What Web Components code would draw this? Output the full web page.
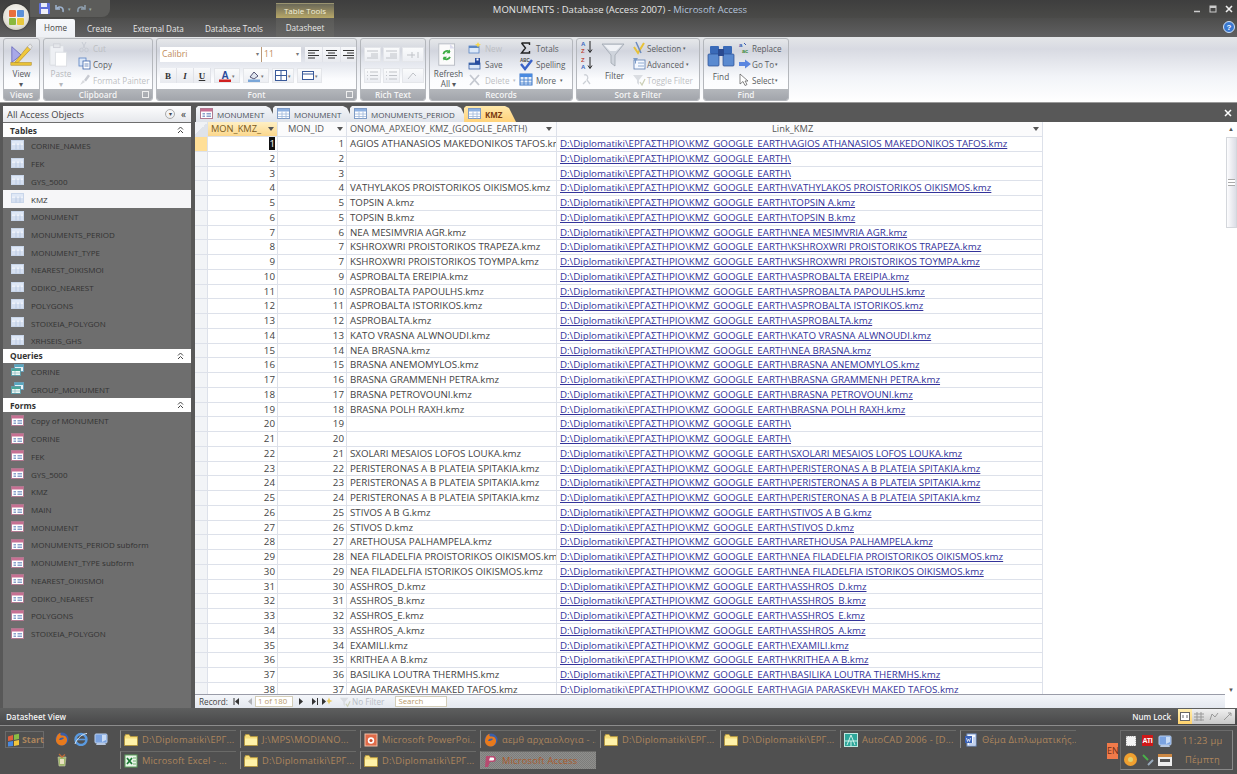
<!DOCTYPE html>
<html><head><meta charset="utf-8"><title>MONUMENTS</title>
<style>
html,body{margin:0;padding:0;width:1237px;height:774px;overflow:hidden;background:#555;font-family:"Open Sans","Noto Sans",sans-serif}
</style></head><body>
<am-app></am-app>
<script>
const ICONS={
table:'<rect x=".5" y="1.5" width="12" height="10" fill="#fff" stroke="#7f9cc6"/><rect x="1" y="2" width="11" height="2.5" fill="#8fb2e2"/><path d="M1 7h11M1 9.5h11M5 4.5v7M9 4.5v7" stroke="#9db6da" stroke-width=".8" fill="none"/>',
tablenav:'<rect x=".5" y="1.5" width="12" height="9" fill="#eef2fa" stroke="#c9d6ea"/><rect x="1" y="2" width="11" height="2.5" fill="#dfe8f6"/><path d="M1 7h11M1 9h11M5 4.5v6M9 4.5v6" stroke="#b4c6e2" stroke-width=".8" fill="none"/>',
form:'<rect x=".5" y="1.5" width="12" height="10" fill="#fff" stroke="#b07a90"/><rect x="1" y="2" width="11" height="2.5" fill="#c76f92"/><rect x="2.500" y="6" width="2.500" height="1.500" fill="#8aa2cc"/><rect x="6.500" y="6" width="4.500" height="1.500" fill="#8aa2cc"/><rect x="2.500" y="8.500" width="2.500" height="1.500" fill="#8aa2cc"/><rect x="6.500" y="8.500" width="4.500" height="1.500" fill="#8aa2cc"/>',
query:'<rect x="3.500" y=".5" width="9" height="7" fill="#e8f2f8" stroke="#6ba0b8"/><rect x="4" y="1" width="8" height="2" fill="#58a8c0"/><rect x=".5" y="4.500" width="9" height="7" fill="#eef8f4" stroke="#5f9da8"/><rect x="1" y="5" width="8" height="2" fill="#4aa89a"/><path d="M1 9h8M4 7v4" stroke="#8ab8c0" stroke-width=".7"/>',
folder:'<path d="M.5 4V12.500H13.500V3.500H6.500L5 1.500H1.500Z" fill="#f6dd7a" stroke="#b8983c" stroke-width=".8"/><path d="M1 5.500H13V12H1Z" fill="#fff2a8"/>',
firefox:'<circle cx="7" cy="7" r="6.500" fill="#3a5ea8"/><path d="M1 9C1 3.500 4 1 6 .8 5 2 5 3 6.500 3.500 9 3 11.500 4 12 7 12.500 10.500 10 13.500 7 13.500 4 13.500 1.500 11.500 1 9Z" fill="#e87a1c"/><path d="M4 8C5 5.500 7 5 9 6 8 7 7.500 7.500 6 8Z" fill="#3a5ea8"/>',
ie:'<circle cx="7" cy="7.500" r="5.500" fill="none" stroke="#5a9ae0" stroke-width="2.400"/><path d="M2 7.500H12" stroke="#5a9ae0" stroke-width="1.600"/><path d="M1 12C3 6 9 1.500 13 1.500" stroke="#d8e8f8" stroke-width="1" fill="none"/>',
desk:'<rect x="1" y="2" width="12" height="9" rx="1" fill="#7aa2e0" stroke="#b9cfee"/><path d="M3 11H11L12 13H2Z" fill="#b8c8e0"/><path d="M8 3H12V8L8 10Z" fill="#c9dcf6"/>',
trash:'<path d="M3 4H11L10 13H4Z" fill="#9fb86a" stroke="#c8c8a8" stroke-width=".6"/><path d="M4 1L7 4 10 1.500" stroke="#c06a3a" stroke-width="1.300" fill="none"/><rect x="5" y="6" width="4" height="5" fill="#e8e0c0"/>',
start:'<path d="M1 3.500 6 2V7L1 8Z" fill="#e0603c"/><path d="M7 1.800 12 .8V6L7 7Z" fill="#8abb44"/><path d="M1 9 6 8V13L1 13.500Z" fill="#4a8ae0"/><path d="M7 8 12 7V12L7 13Z" fill="#f2c63c"/>',
ppt:'<rect x="1" y="1" width="12" height="12" fill="#e06a48" stroke="#f0c0a8"/><circle cx="7" cy="7.500" r="3.200" fill="#fff"/><circle cx="7" cy="7.500" r="1.600" fill="#c84a2c"/>',
excel:'<rect x="1" y="1" width="12" height="12" fill="#e8f4e8" stroke="#5aa05a"/><path d="M3 4 8 10M8 4 3 10" stroke="#1c7a34" stroke-width="1.700"/><path d="M9 4h3M9 7h3M9 10h3" stroke="#6ab06a" stroke-width="1"/>',
acad:'<rect x=".5" y=".5" width="13" height="13" fill="#2ea69a" stroke="#bfe8e0"/><path d="M3 12 7 2 11 12M1 8H13M7 8V13" stroke="#dff8f0" stroke-width=".9" fill="none"/>',
word:'<rect x="3" y="1" width="9" height="12" fill="#f4f8ff" stroke="#7898d0"/><rect x="1" y="3" width="7" height="7" fill="#3a62b8"/><path d="M2.500 5 3.500 8.500 4.500 6 5.500 8.500 6.500 5" stroke="#fff" fill="none" stroke-width=".7"/><path d="M9 5h2M9 7h2M9 9h2M5 11h6" stroke="#7898d0" stroke-width=".8"/>',
access:'<path d="M2 2H9C13 2 13 8 9 8H6L4 13 1 13Z" fill="#b84a70"/><path d="M6 3.500H9C10.500 3.500 10.500 6.500 9 6.500H5Z" fill="#fff"/>',
view:'<path d="M3 5V22L13 14Z" fill="#a8a8e8" stroke="#5a5ab8" stroke-width=".8"/><path d="M6 22 20 5 23 8 10 22Z" fill="#f0c83c" stroke="#a88018" stroke-width=".6"/><path d="M20 5 23 2 25 5 23 8Z" fill="#e8e8e8" stroke="#999" stroke-width=".5"/><rect x="2" y="22" width="22" height="3" fill="#e8c238" stroke="#a88018" stroke-width=".5"/>',
paste:'<rect x="2" y="4" width="15" height="21" rx="1" fill="#eef0f4" stroke="#d8dbe0"/><rect x="6" y="2" width="7" height="4" fill="#e4e6ea" stroke="#d0d2d8"/><rect x="8" y="11" width="12" height="15" fill="#fff" stroke="#dcdfe4"/>',
cut:'<path d="M4 1 7 7M8 1 5 7" stroke="#c8ccd4" fill="none"/><circle cx="3.500" cy="9" r="1.800" fill="none" stroke="#c8ccd4"/><circle cx="8.500" cy="9" r="1.800" fill="none" stroke="#c8ccd4"/>',
copy:'<rect x="1" y="1" width="7" height="8" fill="#dbe7f8" stroke="#5a82c0" stroke-width=".8"/><rect x="5" y="4" width="7" height="8" fill="#fff" stroke="#3a62a8" stroke-width=".8"/><path d="M6.500 7h4M6.500 9h4" stroke="#3a62a8" stroke-width=".7"/>',
brush:'<path d="M2 12 5 7 7 9Z" fill="#d8dade"/><path d="M6 7 10 1.500 12 3 8 8.500Z" fill="#c8cbd2"/>',
new:'<rect x="1" y="5" width="10" height="7" fill="#dce8f8" stroke="#5a86c4" stroke-width=".8"/><rect x="1" y="5" width="10" height="2" fill="#5a86c4"/><path d="M10 1 11 3 13 3.500 11 4.500 10 6.500 9 4.500 7 3.500 9 3Z" fill="#f8d848"/>',
save:'<rect x="1" y="6" width="11" height="6" fill="#dce8f8" stroke="#3a62a8" stroke-width=".8"/><rect x="1" y="6" width="11" height="2" fill="#3a62a8"/><rect x="7" y="1" width="5" height="6" fill="#2a4ea0"/><rect x="8.500" y="1.500" width="2" height="2" fill="#fff"/>',
del:'<path d="M2 2 11 12M11 2 2 12" stroke="#c4c8d0" stroke-width="1.800"/>',
sigma:'<path d="M2.500 2H10.500V4M10.500 10V12H2.500L6.500 7 2.500 2" stroke="#222" stroke-width="1.400" fill="none"/>',
spell:'<path d="M2 7 6 12 13 3" stroke="#3a62c8" stroke-width="2.400" fill="none"/><text x="1" y="5" font-size="4.500" fill="#444" font-family="Liberation Sans" font-weight="700">ABC</text>',
more:'<rect x="1" y="1" width="12" height="11" fill="#e8f0fa" stroke="#3a76c8"/><rect x="1" y="1" width="12" height="3" fill="#4a8ae0"/><path d="M1 7h12M1 10h12M5 4v8M9 4v8" stroke="#3a76c8" stroke-width=".8"/>',
refresh:'<rect x="3" y="2" width="17" height="23" fill="#fbfbfb" stroke="#b8bcc4"/><path d="M15 2 20 7H15Z" fill="#dde"/><path d="M8 13A4 4 0 0 1 15 11M15 16A4 4 0 0 1 8 17" stroke="#3cac44" stroke-width="2" fill="none"/><path d="M15 8V12H11Z" fill="#3cac44"/><path d="M8 20V16H12Z" fill="#3cac44"/>',
sortaz:'<text x="0" y="6" font-size="6" font-family="Liberation Sans" font-weight="700" fill="#3a6ac0">A</text><text x="0" y="12.500" font-size="6" font-family="Liberation Sans" font-weight="700" fill="#c04a3a">Z</text><path d="M9 1V12M7 9.500 9 12.500 11 9.500" stroke="#222" stroke-width="1" fill="none"/>',
sortza:'<text x="0" y="6" font-size="6" font-family="Liberation Sans" font-weight="700" fill="#c04a3a">Z</text><text x="0" y="12.500" font-size="6" font-family="Liberation Sans" font-weight="700" fill="#3a6ac0">A</text><path d="M9 1V12M7 9.500 9 12.500 11 9.500" stroke="#222" stroke-width="1" fill="none"/>',
sortx:'<path d="M3 3C6 2 8 5 6 8L9 12M2 12 5 9" stroke="#ccd0d6" stroke-width="1.300" fill="none"/>',
funnel:'<path d="M1 2H23L14 13V24L10 21V13Z" fill="#cfd4dc" stroke="#9aa0aa" stroke-width=".7"/><path d="M3 3H21L15 9H9Z" fill="#f0f2f6"/>',
selection:'<path d="M2 6 6 12 12 2" stroke="#e8c238" stroke-width="2" fill="none"/><path d="M4 1 9 12" stroke="#6a8ac0" stroke-width="1.500"/>',
adv:'<rect x="2" y="3" width="11" height="9" fill="#f4f8ff" stroke="#5a7ab0" stroke-width=".8"/><path d="M1 1H6L4 4V7L3 6V4Z" fill="#7a9ac8"/><path d="M6 6h6M6 9h6" stroke="#7a9ac8" stroke-width=".8"/>',
toggle:'<path d="M1 2H11L7 7V12L5 10V7Z" fill="#dadde2"/><path d="M8 9 10 12 13 6" stroke="#ccd0b8" stroke-width="1.300" fill="none"/>',
binoc:'<rect x="3" y="4" width="9" height="8" rx="1" fill="#3a6ab8"/><rect x="16" y="4" width="9" height="8" rx="1" fill="#3a6ab8"/><rect x="1" y="12" width="11" height="12" rx="1" fill="#5a8ad0" stroke="#2a4a90" stroke-width=".7"/><rect x="16" y="12" width="11" height="12" rx="1" fill="#5a8ad0" stroke="#2a4a90" stroke-width=".7"/><rect x="11" y="7" width="6" height="7" fill="#2a4a90"/>',
replace:'<text x="1" y="6" font-size="6" font-family="Liberation Sans" fill="#3a5ab0" font-weight="700">a</text><text x="4" y="12" font-size="5.500" font-family="Liberation Sans" fill="#3a8a3a" font-weight="700">ac</text><path d="M6 2 8 4" stroke="#3a5ab0"/>',
goto:'<path d="M1 5H7V2.500L13 7 7 11.500V9H1Z" fill="#5a86e0"/>',
sel:'<path d="M2 1V11L5 8.500 7 12.500 9 11.500 7 8H10Z" fill="#fff" stroke="#555" stroke-width=".7"/>'
};
function ic(n,w=14,h=14,vb){const vbx=vb||`0 0 ${w} ${h}`;return `<svg xmlns="http://www.w3.org/2000/svg" width="${w}" height="${h}" viewBox="${vbx}" style="display:block;flex:none">${ICONS[n]||''}</svg>`}
class Base extends HTMLElement{constructor(){super();this.attachShadow({mode:'open'})}
 connectedCallback(){this.shadowRoot.innerHTML=this.render()}}
const def=(n,r)=>customElements.define(n,class extends Base{render(){return r.call(this)}});
const A=(e,n,d='')=>e.getAttribute(n)??d;

def('ui-icon',function(){const s=A(this,'s','14'),vb=A(this,'vb','0 0 '+s+' '+s);return `<style>:host{display:block;flex:none;width:${s}px;height:${s}px}</style>`+ic(A(this,'n'),+s,+s,vb)});

def('rb-group',function(){return `<style>
:host{display:flex;flex-direction:column;height:63px;width:${A(this,'w')}px;flex:none;box-sizing:border-box;border:1px solid #b4b7bc;border-radius:3px;overflow:hidden;background:linear-gradient(#e6e8ea 0,#d2d5de 12px,#e4e7ee 24px,#fbfcfe 40px,#fff 100%)}
.b{flex:1;min-height:0;position:relative;display:flex}
.l{height:11px;flex:none;background:linear-gradient(#b4b7bc,#a2a5ab);color:#f4f4f4;font-size:8.2px;line-height:11px;text-align:center;font-weight:600;position:relative}
.l i{position:absolute;right:3px;top:2px;width:5px;height:5px;border:1px solid #eee}
</style><div class="b"><slot></slot></div><div class="l">${A(this,'l')}${this.hasAttribute('launch')?'<i></i>':''}</div>`});

def('rb-big',function(){const d=this.hasAttribute('off');const vb=A(this,'vb','0 0 28 28');return `<style>
:host{display:flex;flex-direction:column;align-items:center;flex:none;width:${A(this,'w','36')}px;padding-top:${A(this,'pt','3')}px;font-size:8.2px;line-height:10px;color:${d?'#b6b8bc':'#55585c'};box-sizing:border-box;text-align:center}
.t{margin-top:${A(this,'gap','1')}px;white-space:pre-line}
</style><svg width="28" height="28" viewBox="${vb}" style="display:block">${ICONS[A(this,'n')]||''}</svg><div class="t">${A(this,'t')}</div>`});

def('rb-small',function(){const d=this.hasAttribute('off');return `<style>
:host{display:flex;align-items:center;height:16px;font-size:8.1px;white-space:nowrap;color:${d?'#bcbec2':'#5a5d62'};gap:${A(this,'g','3')}px}
</style>${ic(A(this,'n'))}<span>${A(this,'t')}</span>${this.hasAttribute('dd')?'<span style="font-size:5px;margin-left:1px">▾</span>':''}`});

def('fmt-btn',function(){return `<style>
:host{display:flex;align-items:center;justify-content:center;width:${A(this,'w','16')}px;height:15px;flex:none;color:#333;font:700 9px "Liberation Serif",serif;box-sizing:border-box;background:linear-gradient(#f8f9fb,#e8eaef);border-right:1px solid #e0e2e8}
</style><slot></slot>`});

def('nav-item',function(){const s=this.hasAttribute('sel');return `<style>
:host{display:flex;align-items:center;height:17.72px;padding-left:8px;gap:6px;font-size:8px;color:#333;background:${s?'#f6f6f8':'transparent'};white-space:nowrap;overflow:hidden}
</style>${ic(A(this,'n'))}<span>${A(this,'t')}</span>`});

def('nav-head',function(){return `<style>
:host{display:flex;align-items:center;justify-content:space-between;height:14px;margin:${A(this,'m','0')};padding:0 7px 0 7px;background:#fff;font-size:8.4px;font-weight:700;color:#333}
svg{display:block}
</style><span>${A(this,'t')}</span><svg width="7" height="8" viewBox="0 0 7 8"><path d="M1 3.500 3.500 1 6 3.500M1 7 3.500 4.500 6 7" stroke="#444" fill="none"/></svg>`});

const T=(t,s)=>`<nav-item n="tablenav" t="${t}"${s?' sel':''}></nav-item>`;
def('nav-pane',function(){
 const tabs=['CORINE_NAMES','FEK','GYS_5000','KMZ','MONUMENT','MONUMENTS_PERIOD','MONUMENT_TYPE','NEAREST_OIKISMOI','ODIKO_NEAREST','POLYGONS','STOIXEIA_POLYGON','XRHSEIS_GHS'];
 const forms=['Copy of MONUMENT','CORINE','FEK','GYS_5000','KMZ','MAIN','MONUMENT','MONUMENTS_PERIOD subform','MONUMENT_TYPE subform','NEAREST_OIKISMOI','ODIKO_NEAREST','POLYGONS','STOIXEIA_POLYGON'];
 return `<style>
:host{display:block;width:188px;flex:none;margin-left:3px;background:#6e6e6e;overflow:hidden;font-size:9px}
.top{height:16px;margin-bottom:1px;display:flex;align-items:center;background:linear-gradient(#fdfdfe,#e6e8ec);color:#444;padding:0 5px 0 4px;justify-content:space-between;font-size:9.300px}
.ctl{display:flex;gap:6px;align-items:center}
.c{width:10px;height:10px;border:1px solid #aaa;border-radius:50%;box-sizing:border-box;display:flex;align-items:center;justify-content:center;font-size:6px;line-height:1}
.g{font-size:10px;line-height:10px;color:#333}
</style><div class="top"><span>All Access Objects</span><span class="ctl"><span class="c">▾</span><span class="g">«</span></span></div>
<nav-head t="Tables"></nav-head>
${tabs.map(t=>T(t,t==='KMZ')).join('')}
<nav-head t="Queries" m="-1px 0 0"></nav-head>
<nav-item n="query" t="CORINE"></nav-item><nav-item n="query" t="GROUP_MONUMENT"></nav-item>
<nav-head t="Forms"></nav-head>
${forms.map(t=>`<nav-item n="form" t="${t}"></nav-item>`).join('')}`});

def('doc-tab',function(){const a=this.hasAttribute('active');return `<style>
:host{display:flex;align-items:center;height:16px;width:${A(this,'w')}px;margin-right:-4px;flex:none;padding-left:4px;gap:3px;box-sizing:border-box;font-size:8px;color:${a?'#7a3a10':'#4a4f58'};font-weight:${a?700:400};clip-path:polygon(0 2px,2px 0,calc(100% - 11px) 0,calc(100% - 7px) 2px,100% 100%,0 100%);background:${a?'linear-gradient(#ffe9ac,#ffd27a)':'linear-gradient(#f4f6f9,#dfe3ea)'}}
</style>${ic(A(this,'n'))}<span>${A(this,'t')}</span>`});

const BASE='D:\\Diplomatiki\\ΕΡΓΑΣΤΗΡΙΟ\\KMZ_GOOGLE_EARTH\\';
const P='PERISTERONAS A B PLATEIA SPITAKIA.kmz';
const ROWS=[[1,1,'AGIOS ATHANASIOS MAKEDONIKOS TAFOS.kmz'],[2,2,''],[3,3,''],[4,4,'VATHYLAKOS PROISTORIKOS OIKISMOS.kmz'],[5,5,'TOPSIN A.kmz'],[6,5,'TOPSIN B.kmz'],[7,6,'NEA MESIMVRIA AGR.kmz'],[8,7,'KSHROXWRI PROISTORIKOS TRAPEZA.kmz'],[9,7,'KSHROXWRI PROISTORIKOS TOYMPA.kmz'],[10,9,'ASPROBALTA EREIPIA.kmz'],[11,10,'ASPROBALTA PAPOULHS.kmz'],[12,11,'ASPROBALTA ISTORIKOS.kmz'],[13,12,'ASPROBALTA.kmz'],[14,13,'KATO VRASNA ALWNOUDI.kmz'],[15,14,'NEA BRASNA.kmz'],[16,15,'BRASNA ANEMOMYLOS.kmz'],[17,16,'BRASNA GRAMMENH PETRA.kmz'],[18,17,'BRASNA PETROVOUNI.kmz'],[19,18,'BRASNA POLH RAXH.kmz'],[20,19,''],[21,20,''],[22,21,'SXOLARI MESAIOS LOFOS LOUKA.kmz'],[23,22,P],[24,23,P],[25,24,P],[26,25,'STIVOS A B G.kmz'],[27,26,'STIVOS D.kmz'],[28,27,'ARETHOUSA PALHAMPELA.kmz'],[29,28,'NEA FILADELFIA PROISTORIKOS OIKISMOS.kmz'],[30,29,'NEA FILADELFIA ISTORIKOS OIKISMOS.kmz'],[31,30,'ASSHROS_D.kmz'],[32,31,'ASSHROS_B.kmz'],[33,32,'ASSHROS_E.kmz'],[34,33,'ASSHROS_A.kmz'],[35,34,'EXAMILI.kmz'],[36,35,'KRITHEA A B.kmz'],[37,36,'BASILIKA LOUTRA THERMHS.kmz'],[38,37,'AGIA PARASKEVH MAKED TAFOS.kmz']];

def('data-sheet',function(){
 const arrow='<svg width="6" height="4" viewBox="0 0 6 4"><path d="M0 0H6L3 4Z" fill="#555"/></svg>';
 const head=`<div class="corner"></div><div class="h o"><span>MON_KMZ_</span>${arrow}</div><div class="h"><span>MON_ID</span>${arrow}</div><div class="h n3"><span>ΟΝΟΜΑ_ΑΡΧΕΙΟΥ_KMZ_(GOOGLE_EARTH)</span>${arrow}</div><div class="h c"><span>Link_KMZ</span>${arrow}</div>`;
 const rows=ROWS.map((r,i)=>`<div class="s${i?'':' sa'}"></div><div class="n${i?'':' cur'}"><b>${r[0]}</b></div><div class="n">${r[1]}</div><div class="t">${r[2]}</div><div class="t l"><u>${BASE}${r[2]}</u></div>`).join('');
 return `<style>
:host{display:block;width:1030px;flex:none;overflow:hidden;background:#fff;font-size:9.740px;color:#444}
.g{display:grid;grid-template-columns:13px 70px 69px 210px 486px;grid-template-rows:15px;grid-auto-rows:14.75px;width:848px}
.g>div{box-sizing:border-box;border-bottom:1px solid #dde1ea;border-right:1px solid #dde1ea;overflow:hidden;white-space:nowrap;line-height:14px}
.corner{background:linear-gradient(135deg,#f0f2f5 50%,#dfe3ea 50%)}
.h{display:flex;align-items:center;justify-content:space-between;padding:0 3px 0 10px;color:#555;font-size:9.300px;background:#fbfbfc;line-height:14px!important}
.h.o{background:linear-gradient(#fff0c4,#fbd78c);color:#7a5a20;padding-left:3px}
.h.n3{padding-left:3px;padding-right:4px;font-size:9.150px}
.h.c{padding-left:215px}
.s{background:#f2f4f7}
.s.sa{background:#ffdf97}
.n{text-align:right;padding-right:2px}
.n b{font-weight:400}
.cur b{background:#111;color:#fff;}
.t{padding-left:3px}
.l{color:#33339a}
</style><div class="g">${head}${rows}</div>`});

def('rec-bar',function(){
 const L='<svg width="7" height="7" viewBox="0 0 7 7"><path d="M1 0V7" stroke="#333"/><path d="M6 0V7L2 3.500Z" fill="#333"/></svg>';
 const Lp='<svg width="5" height="7" viewBox="0 0 5 7"><path d="M5 0V7L1 3.500Z" fill="#b0b2b6"/></svg>';
 const R='<svg width="5" height="7" viewBox="0 0 5 7"><path d="M0 0V7L4 3.500Z" fill="#333"/></svg>';
 const Re='<svg width="7" height="7" viewBox="0 0 7 7"><path d="M0 0V7L4 3.500Z" fill="#333"/><path d="M5.500 0V7" stroke="#333"/></svg>';
 const Rn='<svg width="11" height="9" viewBox="0 0 11 9"><path d="M0 1V8L4 4.500Z" fill="#333"/><path d="M7 .5 8 3 10.500 4 8 5 7 7.500 6 5 4.500 4 6 3Z" fill="#e8c860"/></svg>';
 return `<style>
:host{display:flex;align-items:center;height:13px;flex:none;font-size:8.200px;color:#444;background:linear-gradient(#f4f6fa,#e4e8ef);padding-left:4px;width:1027px;white-space:nowrap;border-top:1px solid #9a9ca8;box-sizing:content-box}
svg{display:block;flex:none}
.b{box-sizing:border-box;border:1px solid #d3cdb8;background:#fff;color:#b89a68;height:11px;line-height:9px;padding-left:2px;font-size:7.800px}
.f{color:#b8bcc4;display:flex;align-items:center;gap:1px}
</style><span>Record:</span><span style="margin-left:5px">${L}</span><span style="margin-left:7px">${Lp}</span><span class="b" style="width:38px;margin-left:3px">1 of 180</span><span style="margin-left:6px">${R}</span><span style="margin-left:8px">${Re}</span><span style="margin-left:3px">${Rn}</span><span class="f" style="margin-left:6px">${ic('toggle',12,12,'0 0 14 14')}No Filter</span><span class="b" style="width:52px;margin-left:11px">Search</span>`});

def('v-scroll',function(){return `<style>
:host{display:flex;flex-direction:column;width:12px;flex:none;background:#fff;align-items:center;box-sizing:border-box}
.u{height:15px;font-size:6px;line-height:15px;color:#555}
.th{width:11px;height:91px;border:1px solid #d4d7dc;box-sizing:border-box;background:linear-gradient(90deg,#fdfdfe,#dcdde6);display:flex;align-items:center;justify-content:center}
.th i{display:block;width:7px;height:5px;border-top:1px solid #aaa;border-bottom:1px solid #aaa;background:linear-gradient(#fff 40%,#aaa 40%,#aaa 60%,#fff 60%)}
.sp{flex:1}
</style><div class="u">▲</div><div class="th"><i></i></div><div class="sp"></div><div class="u" style="height:9px;line-height:9px;margin-bottom:13px">▼</div>`});

def('status-bar',function(){return `<style>
:host{display:flex;align-items:center;justify-content:space-between;height:17px;flex:none;background:linear-gradient(#5e5f5f,#484849);color:#f2f2f2;font-size:8px;padding:0 2px 0 6px;box-sizing:border-box;font-weight:600}
.r{display:flex;align-items:center;gap:7px}
.v{display:flex;width:57px;height:15px;background:linear-gradient(#f0f0f0,#c8c8c8);align-items:center}
.v i{flex:1;height:100%;display:flex;align-items:center;justify-content:center}
.v i:first-child{background:linear-gradient(#ffeeb0,#ffd26c)}
.v svg{display:block}
</style><span>Datasheet View</span><span class="r"><span>Num Lock</span><span class="v"><i><svg width="10" height="9"><rect x=".5" y=".5" width="9" height="8" fill="#fff" stroke="#666"/><path d="M3 3V6M7 3V6" stroke="#666"/></svg></i><i><svg width="10" height="9"><path d="M0 2H10M0 5H10M0 8H10M3 0V9M7 0V9" stroke="#999"/></svg></i><i><svg width="10" height="9"><path d="M1 8 3 2 6 5 9 1" stroke="#999" fill="none"/></svg></i><i><svg width="10" height="9"><path d="M1 8 8 1M5 1H8V4" stroke="#999" fill="none"/></svg></i></span></span>`});

def('task-btn',function(){const f=this.hasAttribute('focus');return `<style>
:host{display:flex;align-items:center;box-sizing:border-box;width:${A(this,'w','116')}px;height:18px;flex:none;border-left:1px solid #8a8a88;border-top:1px solid #6a6a68;padding-left:3px;gap:4px;font-size:9.300px;color:#ad855c;white-space:nowrap;overflow:hidden;background:${f?'repeating-conic-gradient(#7d7d7b 0 25%,#8f8f8d 0 50%) 0 0/2px 2px':'#505050'};letter-spacing:.2px;${f?'color:#a85a2a;':''}}
</style>${ic(A(this,'n'))}<span>${A(this,'t')}</span>`});

def('task-bar',function(){const D='D:\\Diplomatiki\\ΕΡΓ...';const B=(n,t,x='')=>`<task-btn n="${n}" t="${t}" ${x}></task-btn>`;
return `<style>
:host{display:flex;height:49px;flex:none;box-sizing:border-box;background:#505050;border-top:1px solid #8c8c8c;position:relative}
.st{width:39px;height:17px;margin:5px 0 0 5px;flex:none;display:flex;align-items:center;gap:1px;font-size:8.800px;font-weight:700;color:#ad855c;box-sizing:border-box;border:1px solid #6b6b6b;padding-left:1px}
.q{display:grid;grid-template-columns:19.500px 19.500px 19.500px;grid-auto-rows:21px;width:60px;margin:6px 0 0 8px;flex:none;justify-items:center}
.g{display:grid;grid-template-columns:repeat(8,116px);column-gap:4px;row-gap:3px;grid-auto-rows:18px;margin:4px 0 0 8px;flex:none}
.ln{position:absolute;left:1107px;top:17px;width:11px;height:16px;background:#f07a4a;color:#703018;font-size:9px;line-height:16px;overflow:hidden}
.tray{position:absolute;left:1120px;top:4px;width:113px;height:40px;box-sizing:border-box;border:1px solid #6b6b6b;border-right-color:#888;border-bottom-color:#888;display:grid;grid-template-columns:17px 17px 17px 1fr;grid-template-rows:1fr 1fr;align-items:center;justify-items:center;padding-left:1px}
.tm{grid-column:4;font-size:9.400px;color:#ad855c;white-space:nowrap;letter-spacing:.3px}
.w{width:10px;height:10px;background:#f4f4f4;border:1px dotted #bbb;box-sizing:border-box}
.ati{font:700 7px "Liberation Sans";color:#fff;background:#d01818;padding:1px;line-height:9px;letter-spacing:-.3px}
.o{width:13px;height:13px;border-radius:50%;background:#f0a030;display:flex;align-items:center;justify-content:center}
.o i{width:5px;height:5px;background:#e0d070;border-radius:50%;display:block}
</style><div class="st">${ic('start')}<span>Start</span></div>
<div class="q">${ic('firefox')}${ic('ie')}${ic('desk')}${ic('trash')}</div>
<div class="g">${B('folder',D)}${B('folder','J:\\MPS\\MODIANO...')}${B('ppt','Microsoft PowerPoi...')}${B('firefox','αεμθ αρχαιολογια - ...')}${B('folder',D)}${B('folder',D)}${B('acad','AutoCAD 2006 - [D...')}${B('word','Θέμα Διπλωματικής...')}${B('excel','Microsoft Excel - ...')}${B('folder',D)}${B('folder',D)}${B('access','Microsoft Access','focus')}</div>
<div class="ln">EN</div>
<div class="tray"><span class="w"></span><span class="ati">ATI</span>${ic('desk')}<span class="tm">11:23 μμ</span><span class="o"><i></i></span><svg width="14" height="14" viewBox="0 0 14 14"><path d="M2 2 7 7" stroke="#4ab04a" stroke-width="2"/><path d="M7 12 12 7" stroke="#9ab" stroke-width="2"/></svg><svg width="14" height="12" viewBox="0 0 14 12"><rect width="14" height="12" fill="#eee"/><rect y="0" width="14" height="3" fill="#c84"/><rect x="2" y="5" width="10" height="3" fill="#555"/></svg><span class="tm">Πέμπτη</span></div>`});

def('ribbon-tabs',function(){return `<style>
:host{display:flex;height:19px;flex:none;background:linear-gradient(#4d4d4c,#606061);color:#e8e8e8;font-size:8.100px;align-items:flex-end;position:relative}
span{display:block;position:absolute;top:2px;line-height:17px;white-space:nowrap}
.h{left:36px;width:39px;top:1px;height:18px;background:linear-gradient(#f6f8fb,#eef0f4);color:#444;border-radius:2px 2px 0 0;text-align:center;line-height:18px}
.dt{left:276px;width:58px;top:0;height:19px;text-align:center;background:linear-gradient(#595957,#666664);line-height:19px}
svg{position:absolute;right:2px;top:3px}
</style><span class="h">Home</span><span style="left:87px">Create</span><span style="left:133px">External Data</span><span style="left:205px">Database Tools</span><span class="dt">Datasheet</span>
<svg width="12" height="12" viewBox="0 0 12 12"><circle cx="6" cy="6" r="5.500" fill="#3a78d0" stroke="#cfe0f4"/><text x="6" y="9" text-anchor="middle" font-size="8" font-weight="700" fill="#fff" font-family="Liberation Sans">?</text></svg>`});

def('title-bar',function(){return `<style>
:host{display:flex;height:18px;flex:none;justify-content:center;align-items:center;position:relative;background:linear-gradient(#3e3e3e,#4a4a48);color:#e4e4e4;font-size:9.500px;padding-left:3px}
em{font-style:normal;color:#b4c4dc}
.tt{position:absolute;left:276px;top:3px;width:58px;height:15px;background:linear-gradient(#6a6858,#b8a868);color:#f4f0d8;font-size:8px;text-align:center;line-height:14px;border-top:1px solid #9a9470;box-sizing:border-box}
.qat{position:absolute;left:30px;top:0;width:80px;height:17px;background:#5c5c5a;border-radius:0 0 8px 0;display:flex;align-items:center;gap:5px;padding-left:9px;box-sizing:border-box;color:#9aa}
.w{position:absolute;right:4px;top:5px;display:flex;gap:8px;color:#e8e8e8;align-items:center}
svg{display:block}
</style><div class="qat"><svg width="11" height="11" viewBox="0 0 11 11"><rect width="11" height="11" rx="1" fill="#6070d8"/><rect x="2" y="0" width="6" height="4" fill="#e8ecf8"/><rect x="2" y="6" width="7" height="5" fill="#f0f0f8"/></svg><svg width="10" height="9" viewBox="0 0 10 9"><path d="M8 8C9 3 5 2 2 4M1 1V5H5" stroke="#9fb4d0" stroke-width="1.500" fill="none"/></svg><span style="font-size:5px;margin-left:-2px">▾</span><svg width="10" height="9" viewBox="0 0 10 9"><path d="M2 8C1 3 5 2 8 4M9 1V5H5" stroke="#8fa0b0" stroke-width="1.500" fill="none"/></svg><span style="font-size:5px;margin-left:-2px">▾</span></div>
<div class="tt">Table Tools</div>
<span>MONUMENTS : Database (Access 2007)&nbsp;-&nbsp;<em>Microsoft Access</em></span>
<div class="w"><svg width="8" height="8"><path d="M1 6.500H7" stroke="#ccc" stroke-width="1.500"/></svg><svg width="8" height="8"><rect x="1" y="1" width="6" height="6" fill="none" stroke="#ccc"/><path d="M1 2H7" stroke="#ccc" stroke-width="2"/></svg><svg width="8" height="8"><path d="M1 1 7 7M7 1 1 7" stroke="#eee" stroke-width="1.600"/></svg></div>`});

def('office-orb',function(){return `<style>
:host{position:absolute;left:3px;top:4px;width:26px;height:26px;border-radius:50%;background:radial-gradient(circle at 50% 40%,#fafafa 0,#e4e2d8 60%,#b4b09c 100%);display:grid;grid-template-columns:7px 7px;grid-template-rows:7px 7px;align-content:center;justify-content:center;gap:1px;box-shadow:0 0 2px #222}
i{display:block;border-radius:1px}
</style><i style="background:#e8703c"></i><i style="background:#5a90d8"></i><i style="background:#8ab83c"></i><i style="background:#e8c83c"></i>`});

def('font-group',function(){return `<style>
:host{display:flex;flex-direction:column;padding:8px 0 0 3px;gap:6px;width:100%}
.r{display:flex;align-items:center;height:15px}
.f{background:#fff;height:15px;box-sizing:border-box;color:#c08a58;font-size:8.600px;line-height:15px;padding-left:2px;position:relative}
.f::after{content:"▾";position:absolute;right:2px;top:0;color:#777;font-size:6px}
.sp{width:6px}
.cell{display:flex;align-items:center;justify-content:center;height:15px;background:linear-gradient(#fafbfc,#eceef3);box-sizing:border-box;border:1px solid #e4e6ea;gap:1px;font-size:5px;color:#777}
svg{display:block}
</style>
<div class="r"><div class="f" style="width:101px">Calibri</div><div class="f" style="width:40px;border-left:1px solid #b89878">11</div><div class="sp" style="width:4px"></div>
<fmt-btn w="18"><svg width="11" height="9"><path d="M0 .5H11M0 3H7M0 5.500H11M0 8H7" stroke="#333"/></svg></fmt-btn><fmt-btn w="18"><svg width="11" height="9"><path d="M0 .5H11M2 3H9M0 5.500H11M2 8H9" stroke="#333"/></svg></fmt-btn><fmt-btn w="16"><svg width="11" height="9"><path d="M0 .5H11M4 3H11M0 5.500H11M4 8H11" stroke="#333"/></svg></fmt-btn></div>
<div class="r"><fmt-btn w="17">B</fmt-btn><fmt-btn w="17"><i>I</i></fmt-btn><fmt-btn w="17"><u>U</u></fmt-btn><div class="sp" style="width:3px"></div>
<div class="cell" style="width:26px"><svg width="12" height="12" viewBox="0 0 12 12"><text x="6" y="8.500" text-anchor="middle" font-size="10" font-weight="700" fill="#2a4a9a" font-family="Liberation Sans">A</text><rect x="0" y="9.500" width="12" height="2.500" fill="#d02020"/></svg>▾</div><div class="sp" style="width:3px"></div>
<div class="cell" style="width:26px"><svg width="12" height="12" viewBox="0 0 12 12"><path d="M2 7 6 2 10 6 6 9Z" fill="#dfe5ee" stroke="#557"/><rect y="9.500" width="12" height="2.500" fill="#7aa6d8"/></svg>▾</div><div class="sp" style="width:3px"></div>
<div class="cell" style="width:22px"><svg width="12" height="11"><rect x=".5" y=".5" width="11" height="10" fill="#fff" stroke="#3a5a9a"/><path d="M6 0V11M0 5.500H12" stroke="#3a5a9a"/></svg>▾</div><div class="sp" style="width:3px"></div>
<div class="cell" style="width:25px"><svg width="12" height="9"><rect x=".5" y=".5" width="11" height="8" fill="#fff" stroke="#3a5a9a"/><path d="M0 3H12" stroke="#3a5a9a"/></svg>▾</div></div>`});

def('rich-group',function(){const c=(w,s)=>`<div class="cell" style="width:${w}px">${s}</div>`;const a='<svg width="11" height="9"><path d="M0 1H11M4 4H11M4 6H11M0 8H11" stroke="#c0c3c8"/></svg>';const b='<svg width="11" height="9"><path d="M3 1H11M3 4.500H11M3 8H11M0 1H1M0 4.500H1M0 8H1" stroke="#c0c3c8"/></svg>';return `<style>
:host{display:grid;grid-template-columns:repeat(3,auto);grid-auto-rows:15px;padding:8px 0 0 3px;gap:6px 2px;align-content:start;justify-content:start}
.cell{height:15px;display:flex;align-items:center;justify-content:center;background:linear-gradient(#fafbfc,#eceef3);border:1px solid #e4e6ea;box-sizing:border-box}
svg{display:block}
</style>${c(17,a)}${c(17,a)}${c(22,'<svg width="13" height="8"><path d="M0 4H8M5 1V7M11 1V7" stroke="#c0c3c8"/></svg>')}${c(17,b)}${c(17,b)}${c(22,'<svg width="13" height="8"><path d="M1 7 6 1 9 4" stroke="#c0c3c8" fill="none"/></svg>')}`});

def('col-stack',function(){return `<style>:host{display:flex;flex-direction:column;padding:${A(this,'p','1px 0 0')};width:${A(this,'w')}px;flex:none;box-sizing:border-box}</style><slot></slot>`});

def('ribbon-bar',function(){return `<style>
:host{display:flex;height:66px;flex:none;box-sizing:border-box;background:linear-gradient(#e4e6e8,#d8dae2 12px,#f2f4f8 40px,#fff);padding:1px 0 0 3px;gap:3px;border-bottom:1px solid #9a9a9a}
</style><slot></slot>`});

def('doc-head',function(){return `<style>
:host{display:flex;height:16px;align-items:flex-end;flex:none;background:#585858;position:relative;padding-left:1px}
svg{position:absolute;right:5px;top:3px}
</style><doc-tab n="form" t="MONUMENT" w="81"></doc-tab><doc-tab n="table" t="MONUMENT" w="81"></doc-tab><doc-tab n="table" t="MONUMENTS_PERIOD" w="118"></doc-tab><doc-tab n="table" t="KMZ" w="52" active></doc-tab>
<svg width="8" height="8"><path d="M1 1 7 7M7 1 1 7" stroke="#fff" stroke-width="1.500"/></svg>`});

def('am-app',function(){return `<style>
:host{display:flex;flex-direction:column;width:1237px;height:774px;overflow:hidden;position:relative;font-family:"Open Sans","Noto Sans",sans-serif}
.main{display:flex;flex:1;min-height:0;background:#585858;padding-top:3px}
.right{margin-left:4px;width:1042px;flex:none;display:flex;flex-direction:column;min-height:0}
.body{flex:1;display:flex;min-height:0;background:#fff}
.cont{display:flex;flex-direction:column;flex:none;width:1030px;min-height:0}
data-sheet{flex:1;min-height:0}
</style>
<title-bar></title-bar><ribbon-tabs></ribbon-tabs>
<ribbon-bar>
<rb-group w="37" l="Views"><rb-big n="view" t="View\n▾" w="35"></rb-big></rb-group>
<rb-group w="110" l="Clipboard" launch><rb-big n="paste" off t="Paste\n▾" w="34"></rb-big><col-stack w="74"><rb-small n="cut" g="1" off t="Cut"></rb-small><rb-small n="copy" g="1" t="Copy"></rb-small><rb-small n="brush" g="1" off t="Format Painter"></rb-small></col-stack></rb-group>
<rb-group w="201" l="Font" launch><font-group></font-group></rb-group>
<rb-group w="66" l="Rich Text"><rich-group></rich-group></rb-group>
<rb-group w="144" l="Records"><rb-big n="refresh" t="Refresh\nAll ▾" w="37"></rb-big><col-stack w="52" p="1px 0 0 1px"><rb-small n="new" off t="New"></rb-small><rb-small n="save" t="Save"></rb-small><rb-small n="del" off t="Delete" dd></rb-small></col-stack><col-stack w="52" p="1px 0 0 0"><rb-small n="sigma" t="Totals"></rb-small><rb-small n="spell" t="Spelling"></rb-small><rb-small n="more" t="More" dd></rb-small></col-stack></rb-group>
<rb-group w="124" l="Sort &amp; Filter"><col-stack w="20" p="1px 0 0 4px"><ui-icon n="sortaz"></ui-icon><span style="height:2px"></span><ui-icon n="sortza"></ui-icon><span style="height:2px"></span><ui-icon n="sortx"></ui-icon></col-stack><rb-big n="funnel" t="Filter" w="35"></rb-big><col-stack w="66"><rb-small n="selection" g="1" t="Selection" dd></rb-small><rb-small n="adv" g="1" t="Advanced" dd></rb-small><rb-small n="toggle" g="1" off t="Toggle Filter"></rb-small></col-stack></rb-group>
<rb-group w="86" l="Find"><rb-big n="binoc" t="Find" w="34" gap="2"></rb-big><col-stack w="50"><rb-small n="replace" g="0" t="Replace"></rb-small><rb-small n="goto" g="0" t="Go To" dd></rb-small><rb-small n="sel" g="0" t="Select" dd></rb-small></col-stack></rb-group>
</ribbon-bar>
<office-orb></office-orb>
<div class="main"><nav-pane></nav-pane><div class="right"><doc-head></doc-head><div class="body"><div class="cont"><data-sheet></data-sheet><rec-bar></rec-bar></div><v-scroll></v-scroll></div></div></div>
<status-bar></status-bar><task-bar></task-bar>`});
</script>
</body></html>
